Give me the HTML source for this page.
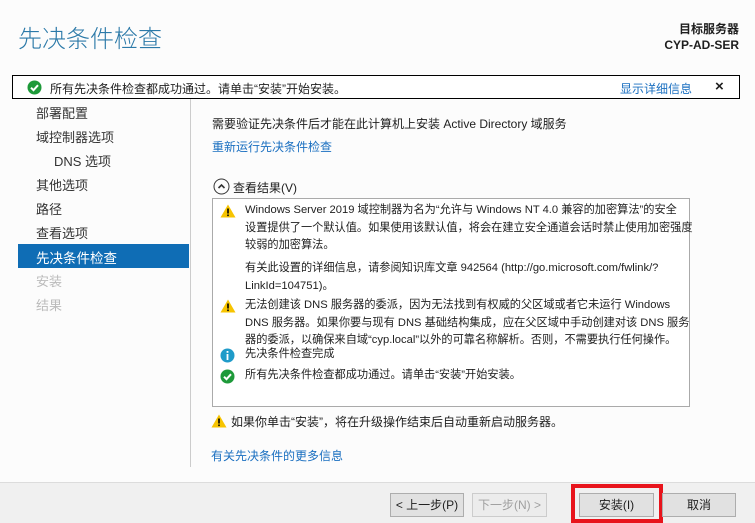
<!DOCTYPE html>
<html><head><meta charset="utf-8"><style>
*{margin:0;padding:0;box-sizing:border-box}
body{width:755px;height:523px;background:#fcfcfc;font-family:"Liberation Sans","Noto Sans CJK SC",sans-serif;font-size:12px;color:#1e1e1e;position:relative;overflow:hidden}
.a{position:absolute;white-space:nowrap}
.title{left:18px;top:19px;font-size:24px;color:#2b79a8;font-weight:300}
.srv{right:16px;top:21px;text-align:right;font-weight:bold;font-size:12px;line-height:16px}
.bar{left:12px;top:75px;width:728px;height:24px;border:1px solid #000;background:#fff}
.nav{left:36px;font-size:13px;color:#333}
.link{color:#1a6fc0}
.box{left:212px;top:198px;width:478px;height:209px;border:1px solid #aaa;background:#fff}
.p{position:absolute;left:32px;font-size:11.2px;line-height:17.5px;white-space:nowrap}
.btn{position:absolute;top:493px;height:24px;border:1px solid #adadad;background:#e1e1e1;text-align:center;line-height:22px;font-size:12px}
</style></head><body>
<div class="a title">先决条件检查</div>
<div class="a srv">目标服务器<br>CYP-AD-SER</div>
<div class="a bar">
 <svg class="a" style="left:14px;top:4px" width="15" height="15"><circle cx="7.5" cy="7.5" r="7" fill="#1e9a3a"/><path d="M4 7.7l2.5 2.5 4.5-5" stroke="#fff" stroke-width="2" fill="none"/></svg>
 <div class="a" style="left:37px;top:4px">所有先决条件检查都成功通过。请单击“安装”开始安装。</div>
 <div class="a link" style="left:607px;top:4px">显示详细信息</div>
 <div class="a" style="left:702px;top:2px;font-weight:bold;font-size:15px">×</div>
</div>
<div class="a" style="left:190px;top:99px;width:1px;height:368px;background:#ccc"></div>
<div class="a nav" style="top:103px">部署配置</div>
<div class="a nav" style="top:127px">域控制器选项</div>
<div class="a nav" style="top:151px;left:54px">DNS 选项</div>
<div class="a nav" style="top:175px">其他选项</div>
<div class="a nav" style="top:199px">路径</div>
<div class="a nav" style="top:223px">查看选项</div>
<div class="a" style="left:18px;top:244px;width:171px;height:24px;background:#0f6db5"></div>
<div class="a nav" style="top:247px;color:#fff;font-size:13.5px">先决条件检查</div>
<div class="a nav" style="top:271px;color:#bbb">安装</div>
<div class="a nav" style="top:295px;color:#bbb">结果</div>
<div class="a" style="left:212px;top:115px">需要验证先决条件后才能在此计算机上安装 Active Directory 域服务</div>
<div class="a link" style="left:212px;top:138px">重新运行先决条件检查</div>
<svg class="a" style="left:213px;top:178px" width="17" height="17"><circle cx="8.5" cy="8.5" r="7.5" fill="none" stroke="#333"/><path d="M5.5 10l3-3 3 3" stroke="#333" stroke-width="1.6" fill="none"/></svg>
<div class="a" style="left:233px;top:179px">查看结果(V)</div>
<div class="a box">
 <svg class="a" style="left:7px;top:5px" width="16" height="14"><path d="M8 0.5L15.5 13.5H0.5Z" fill="#f7c400"/><rect x="7.2" y="4.5" width="1.6" height="5" fill="#000"/><rect x="7.2" y="10.5" width="1.6" height="1.6" fill="#000"/></svg>
 <div class="p" style="top:3px">Windows Server 2019 域控制器为名为“允许与 Windows NT 4.0 兼容的加密算法”的安全<br>设置提供了一个默认值。如果使用该默认值，将会在建立安全通道会话时禁止使用加密强度<br>较弱的加密算法。</div>
 <div class="p" style="top:61px">有关此设置的详细信息，请参阅知识库文章 942564 (http://go.microsoft.com/fwlink/?<br>LinkId=104751)。</div>
 <svg class="a" style="left:7px;top:100px" width="16" height="14"><path d="M8 0.5L15.5 13.5H0.5Z" fill="#f7c400"/><rect x="7.2" y="4.5" width="1.6" height="5" fill="#000"/><rect x="7.2" y="10.5" width="1.6" height="1.6" fill="#000"/></svg>
 <div class="p" style="top:98px">无法创建该 DNS 服务器的委派，因为无法找到有权威的父区域或者它未运行 Windows<br>DNS 服务器。如果你要与现有 DNS 基础结构集成，应在父区域中手动创建对该 DNS 服务<br>器的委派，以确保来自域“cyp.local”以外的可靠名称解析。否则，不需要执行任何操作。</div>
 <svg class="a" style="left:7px;top:149px" width="15" height="15"><circle cx="7.5" cy="7.5" r="7" fill="#1f9bc9"/><rect x="6.6" y="6" width="1.8" height="6" fill="#fff"/><rect x="6.6" y="3" width="1.8" height="1.8" fill="#fff"/></svg>
 <div class="p" style="top:147px">先决条件检查完成</div>
 <svg class="a" style="left:7px;top:170px" width="15" height="15"><circle cx="7.5" cy="7.5" r="7" fill="#1e9a3a"/><path d="M4 7.7l2.5 2.5 4.5-5" stroke="#fff" stroke-width="2" fill="none"/></svg>
 <div class="p" style="top:168px">所有先决条件检查都成功通过。请单击“安装”开始安装。</div>
</div>
<svg class="a" style="left:211px;top:414px" width="16" height="14"><path d="M8 0.5L15.5 13.5H0.5Z" fill="#f7c400"/><rect x="7.2" y="4.5" width="1.6" height="5" fill="#000"/><rect x="7.2" y="10.5" width="1.6" height="1.6" fill="#000"/></svg>
<div class="a" style="left:231px;top:413px">如果你单击“安装”，将在升级操作结束后自动重新启动服务器。</div>
<div class="a link" style="left:211px;top:447px">有关先决条件的更多信息</div>
<div class="a" style="left:0;top:482px;width:755px;height:41px;background:#f0f0f0;border-top:1px solid #dcdcdc"></div>
<div class="btn" style="left:390px;width:74px">&lt; 上一步(P)</div>
<div class="btn" style="left:472px;width:75px;color:#a0a0a0;background:#ececec;border-color:#ccc">下一步(N) &gt;</div>
<div class="a" style="left:571px;top:484px;width:92px;height:39px;border:4px solid #e8141c"></div>
<div class="btn" style="left:579px;width:75px">安装(I)</div>
<div class="btn" style="left:662px;width:74px">取消</div>
</body></html>
